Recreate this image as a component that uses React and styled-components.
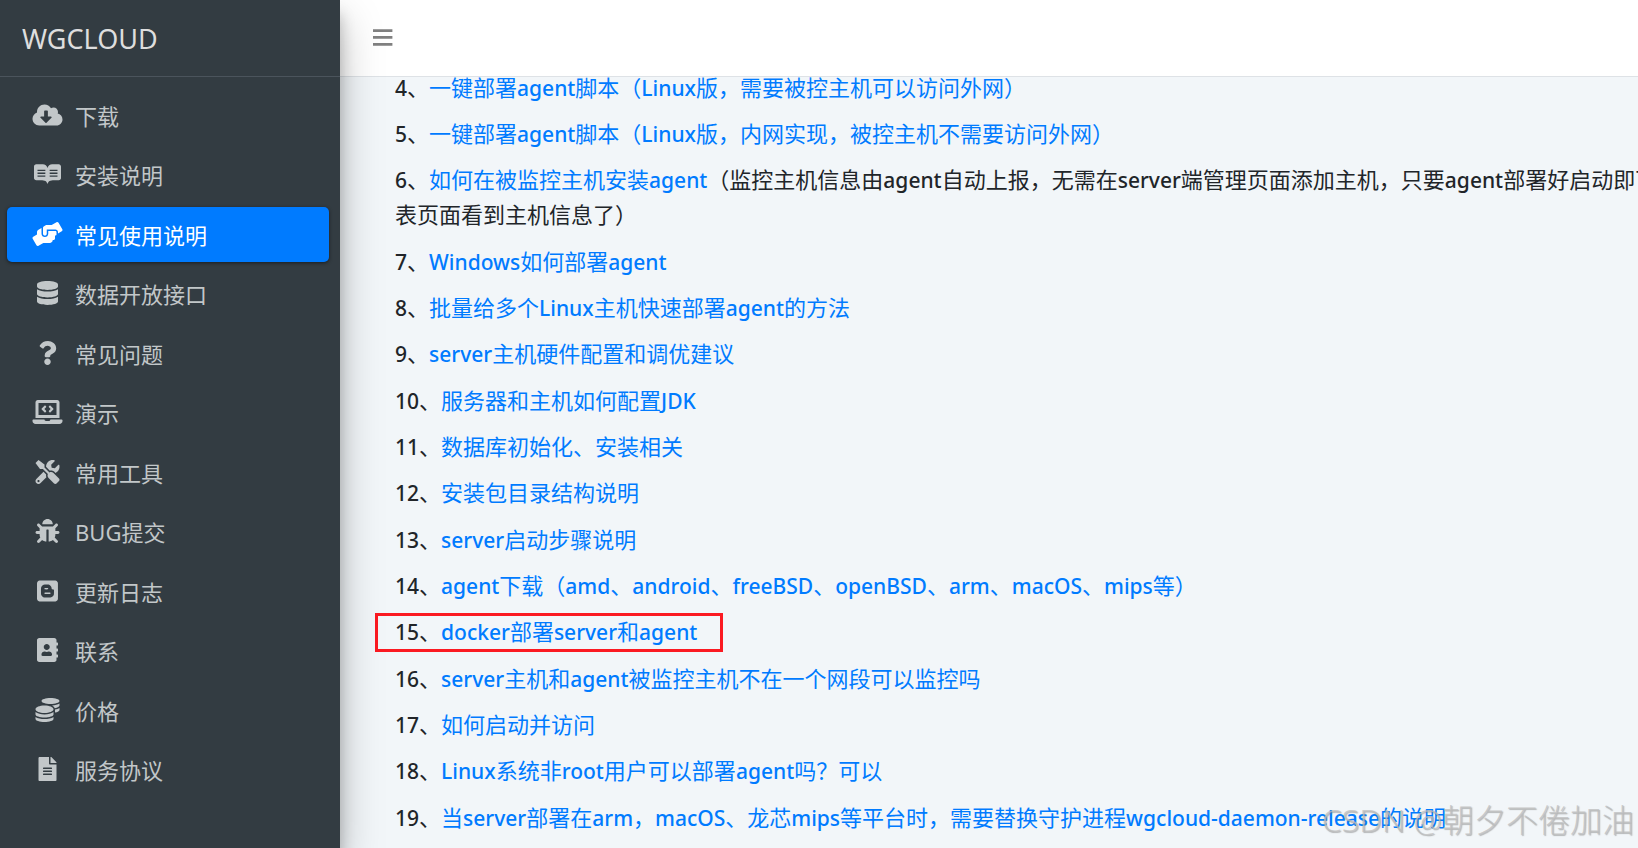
import React, { memo } from 'react'
import styled, { createGlobalStyle } from 'styled-components'
import {
  FaCloudDownloadAlt,
  FaReadme,
  FaHandsHelping,
  FaDatabase,
  FaQuestion,
  FaLaptopCode,
  FaTools,
  FaBug,
  FaBlogger,
  FaAddressBook,
  FaCoins,
  FaFileAlt,
} from 'react-icons/fa'

const menus = [
  { name: '下载', icon: FaCloudDownloadAlt },
  { name: '安装说明', icon: FaReadme },
  { name: '常见使用说明', icon: FaHandsHelping, active: true },
  { name: '数据开放接口', icon: FaDatabase },
  { name: '常见问题', icon: FaQuestion },
  { name: '演示', icon: FaLaptopCode },
  { name: '常用工具', icon: FaTools },
  { name: 'BUG提交', icon: FaBug },
  { name: '更新日志', icon: FaBlogger },
  { name: '联系', icon: FaAddressBook },
  { name: '价格', icon: FaCoins },
  { name: '服务协议', icon: FaFileAlt },
]

const docs = [
  { no: 4, title: '一键部署agent脚本（Linux版，需要被控主机可以访问外网）' },
  { no: 5, title: '一键部署agent脚本（Linux版，内网实现，被控主机不需要访问外网）' },
  {
    no: 6,
    title: '如何在被监控主机安装agent',
    note: '（监控主机信息由agent自动上报，无需在server端管理页面添加主机，只要agent部署好启动即可在主机列\n表页面看到主机信息了）',
  },
  { no: 7, title: 'Windows如何部署agent' },
  { no: 8, title: '批量给多个Linux主机快速部署agent的方法' },
  { no: 9, title: 'server主机硬件配置和调优建议' },
  { no: 10, title: '服务器和主机如何配置JDK' },
  { no: 11, title: '数据库初始化、安装相关' },
  { no: 12, title: '安装包目录结构说明' },
  { no: 13, title: 'server启动步骤说明' },
  { no: 14, title: 'agent下载（amd、android、freeBSD、openBSD、arm、macOS、mips等）' },
  { no: 15, title: 'docker部署server和agent', marked: true },
  { no: 16, title: 'server主机和agent被监控主机不在一个网段可以监控吗' },
  { no: 17, title: '如何启动并访问' },
  { no: 18, title: 'Linux系统非root用户可以部署agent吗？可以' },
  { no: 19, title: '当server部署在arm，macOS、龙芯mips等平台时，需要替换守护进程wgcloud-daemon-release的说明' },
]

// 中文用常规字重，英文和数字加粗一档
function MixedText({ text }) {
  return String(text)
    .split(/([\w-]+)/)
    .map((part, i) => (i % 2 ? <Latin key={i}>{part}</Latin> : part))
}

const Sidebar = memo(() => (
  <SidebarWrapper>
    <Brand href="#">WGCLOUD</Brand>
    <nav>
      <MenuList>
        {menus.map(({ name, icon: Icon, active }) => (
          <MenuItem key={name}>
            <MenuLink href="#" $active={active}>
              <IconBox><Icon /></IconBox>
              {name}
            </MenuLink>
          </MenuItem>
        ))}
      </MenuList>
    </nav>
  </SidebarWrapper>
))

const DocList = memo(() => (
  <DocListWrapper>
    {docs.map(({ no, title, note, marked }) => (
      <DocItem key={no}>
        <MixedText text={`${no}、`} />
        <DocLink href="#"><MixedText text={title} /></DocLink>
        {note && <MixedText text={note} />}
        {marked && <MarkBox />}
      </DocItem>
    ))}
  </DocListWrapper>
))

export default function App() {
  return (
    <Layout>
      <GlobalStyle />
      <Sidebar />
      <Main>
        <Header>
          <ToggleButton type="button" aria-label="menu">
            <svg width="20" height="18" viewBox="0 0 20 18" fill="currentColor" aria-hidden="true"><path d="M0 .3h19.4v2.7H0zM0 7h19.4v2.8H0zM0 14h19.4v2.8H0z"></path></svg>
          </ToggleButton>
        </Header>
        <DocList />
      </Main>
      <Watermark>CSDN @朝夕不倦加油</Watermark>
    </Layout>
  )
}

const GlobalStyle = createGlobalStyle`
* {
  box-sizing: border-box;
}
body {
  margin: 0;
  font-family: "Noto Sans", "Noto Sans CJK SC", sans-serif;
  font-size: 22px;
  color: #212529;
  background: #f2f6f9;
}
a {
  text-decoration: none;
}
`

const Layout = styled.div`
display: flex;
height: 100vh;
overflow: hidden;
position: relative;
`

const SidebarWrapper = styled.aside`
flex: 0 0 340px;
background: #333c42;
box-shadow: 0 20px 40px rgba(0,0,0,.25), 0 14px 14px rgba(0,0,0,.22);
z-index: 2;
`

const Brand = styled.a`
display: flex;
align-items: center;
height: 77px;
padding: 0 22px;
border-bottom: 1px solid #4b545c;
font-size: 27px;
color: #dedede;
`

const MenuList = styled.ul`
list-style: none;
margin: 0;
padding: 11px 11px 0 7px;
`

const MenuItem = styled.li`
margin-bottom: 4px;
&:nth-child(even) {
  margin-bottom: 5px;
}
`

const MenuLink = styled.a`
display: flex;
align-items: center;
gap: 10px;
height: 55px;
padding: 0 22px 1px;
border-radius: 5px;
color: ${props => props.$active ? '#fff' : '#c2c7c9'};
background: ${props => props.$active ? '#007bff' : 'transparent'};
box-shadow: ${props => props.$active ? '0 1px 4px rgba(0,0,0,.24), 0 1px 3px rgba(0,0,0,.3)' : 'none'};
`

const IconBox = styled.span`
display: flex;
justify-content: center;
width: 36px;
svg {
  width: 31px;
  height: 24px;
}
`

const Main = styled.main`
flex: 1;
min-width: 0;
`

const Header = styled.header`
display: flex;
align-items: center;
position: relative;
z-index: 1;
height: 77px;
padding: 0 33px;
background: #fff;
border-bottom: 1px solid #dee2e6;
`

const ToggleButton = styled.button`
display: flex;
padding: 0;
border: 0;
background: none;
color: #808080;
`

/* scrolled a little under the header */
const DocListWrapper = styled.ul`
list-style: none;
margin: -7px 0 0;
padding: 0 0 0 55px;
white-space: pre;
line-height: 35px;
`

const DocItem = styled.li`
position: relative;
margin-bottom: 11px;
&:nth-child(3n) {
  margin-bottom: 12px;
}
`

const DocLink = styled.a`
color: #007bff;
`

const Latin = styled.span`
font-size: 21px;
font-weight: 500;
line-height: 1;
`

const MarkBox = styled.span`
position: absolute;
top: -1px;
left: -20px;
width: 348px;
height: 39px;
border: 3px solid #fb1a22;
`

const Watermark = styled.div`
position: absolute;
right: 4px;
bottom: 6px;
font-size: 32px;
line-height: 44px;
font-weight: 300;
color: rgba(190,190,190,.75);
text-shadow: 1px 1px 1px rgba(120,120,120,.5);
`
